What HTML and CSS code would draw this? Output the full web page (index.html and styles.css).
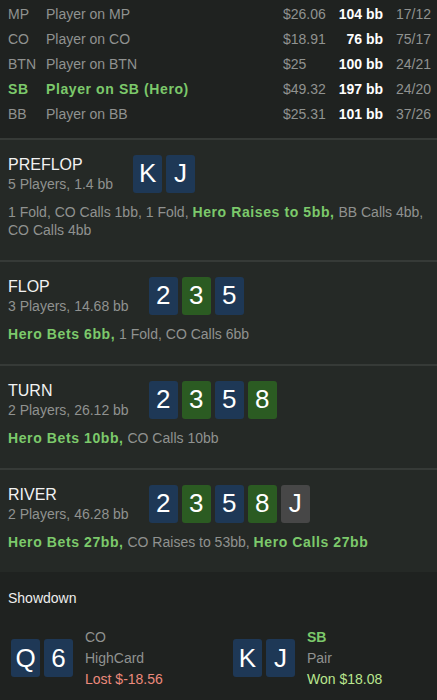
FILE: index.html
```html
<!DOCTYPE html>
<html lang="en">

<head>
    <meta charset="UTF-8">
    <meta name="viewport" content="width=device-width, initial-scale=1.0">
    <title>Hand</title>
    <link rel="stylesheet" href="styles.css">
</head>

<body>
    <section class="players">
        <div class="player">
            <span class="pos">MP</span><span class="name">Player on MP</span>
            <span class="stack">$26.06</span><span class="bb">104 bb</span><span class="stat">17/12</span>
        </div>
        <div class="player">
            <span class="pos">CO</span><span class="name">Player on CO</span>
            <span class="stack">$18.91</span><span class="bb">76 bb</span><span class="stat">75/17</span>
        </div>
        <div class="player">
            <span class="pos">BTN</span><span class="name">Player on BTN</span>
            <span class="stack">$25</span><span class="bb">100 bb</span><span class="stat">24/21</span>
        </div>
        <div class="player hero">
            <span class="pos">SB</span><span class="name">Player on SB (Hero)</span>
            <span class="stack">$49.32</span><span class="bb">197 bb</span><span class="stat">24/20</span>
        </div>
        <div class="player">
            <span class="pos">BB</span><span class="name">Player on BB</span>
            <span class="stack">$25.31</span><span class="bb">101 bb</span><span class="stat">37/26</span>
        </div>
    </section>

    <section class="street">
        <div class="head">
            <div class="title">
                <h2>PREFLOP</h2>
                <p>5 Players, 1.4 bb</p>
            </div>
            <div class="cards">
                <span class="card blue">K</span><span class="card blue">J</span>
            </div>
        </div>
        <p class="actions"><span>1 Fold, CO Calls 1bb, 1 Fold,</span> <b>Hero Raises to 5bb,</b> <span>BB Calls 4bb,</span> <span>CO Calls 4bb</span></p>
    </section>

    <section class="street">
        <div class="head">
            <div class="title">
                <h2>FLOP</h2>
                <p>3 Players, 14.68 bb</p>
            </div>
            <div class="cards">
                <span class="card blue">2</span><span class="card green">3</span><span class="card blue">5</span>
            </div>
        </div>
        <p class="actions"><b>Hero Bets 6bb,</b> 1 Fold, CO Calls 6bb</p>
    </section>

    <section class="street">
        <div class="head">
            <div class="title">
                <h2>TURN</h2>
                <p>2 Players, 26.12 bb</p>
            </div>
            <div class="cards">
                <span class="card blue">2</span><span class="card green">3</span><span class="card blue">5</span><span class="card green">8</span>
            </div>
        </div>
        <p class="actions"><b>Hero Bets 10bb,</b> CO Calls 10bb</p>
    </section>

    <section class="street">
        <div class="head">
            <div class="title">
                <h2>RIVER</h2>
                <p>2 Players, 46.28 bb</p>
            </div>
            <div class="cards">
                <span class="card blue">2</span><span class="card green">3</span><span class="card blue">5</span><span class="card green">8</span><span class="card grey">J</span>
            </div>
        </div>
        <p class="actions"><b>Hero Bets 27bb,</b> CO Raises to 53bb, <b>Hero Calls 27bb</b></p>
    </section>

    <section class="showdown">
        <h3>Showdown</h3>
        <div class="hands">
            <div class="hand">
                <div class="cards">
                    <span class="card blue">Q</span><span class="card blue">6</span>
                </div>
                <div class="info">
                    <p>CO</p>
                    <p>HighCard</p>
                    <p class="lost">Lost $-18.56</p>
                </div>
            </div>
            <div class="hand">
                <div class="cards">
                    <span class="card blue">K</span><span class="card blue">J</span>
                </div>
                <div class="info">
                    <p class="me">SB</p>
                    <p>Pair</p>
                    <p class="won">Won $18.08</p>
                </div>
            </div>
        </div>
    </section>
</body>

</html>
```

FILE: styles.css
```css
*,
::before,
::after {
    margin: 0;
    box-sizing: border-box;
}

body {
    font: 14px/1.2 "Liberation Sans", Arial, sans-serif;
    background: #1f2220;
    color: #909290;
}

b {
    color: #7cc96b;
    letter-spacing: 0.6px;
}

.players {
    padding: 2px 0 11px;
}

.player {
    display: grid;
    grid-template-columns: 38px 237px 50px 50px 1fr;
    align-items: center;
    height: 25px;
    padding-left: 8px;
    white-space: nowrap;
}

.player .bb {
    text-align: right;
    color: #fff;
    font-weight: bold;
}

.player .stat {
    padding-left: 13px;
}

.player.hero .pos,
.player.hero .name {
    color: #7cc96b;
    font-weight: bold;
    letter-spacing: 0.6px;
}

.street {
    background: #252926;
    border-top: 2px solid #363a37;
    padding: 15px 8px 21px;
}

.head {
    display: flex;
    align-items: center;
    gap: 20px;
}

.title h2 {
    font-size: 16px;
    font-weight: 400;
    line-height: 20px;
    color: #f2f2f2;
}

.title p {
    line-height: 18px;
}

.cards {
    display: flex;
    gap: 4px;
}

.card {
    width: 29px;
    height: 38px;
    border-radius: 3px;
    display: grid;
    place-content: center;
    font-size: 26px;
    color: #fff;
}

.card.blue {
    background: #1e3856;
}

.card.green {
    background: #2b5b22;
}

.card.grey {
    background: #474747;
}

.actions {
    margin-top: 10px;
    line-height: 18px;
}

.actions span {
    white-space: nowrap;
}

.showdown {
    padding: 18px 8px 10px;
}

.showdown h3 {
    font-size: 14px;
    font-weight: 400;
    color: #eee;
}

.hands {
    display: grid;
    grid-template-columns: 222px 1fr;
    margin-top: 20px;
    padding-left: 3px;
}

.hand {
    display: flex;
    align-items: center;
    gap: 12px;
}

.info p {
    line-height: 21px;
}

.info .lost {
    color: #ec8a7c;
}

.info .won {
    color: #b9e68e;
}

.info .me {
    color: #7cc96b;
    font-weight: bold;
}
```
